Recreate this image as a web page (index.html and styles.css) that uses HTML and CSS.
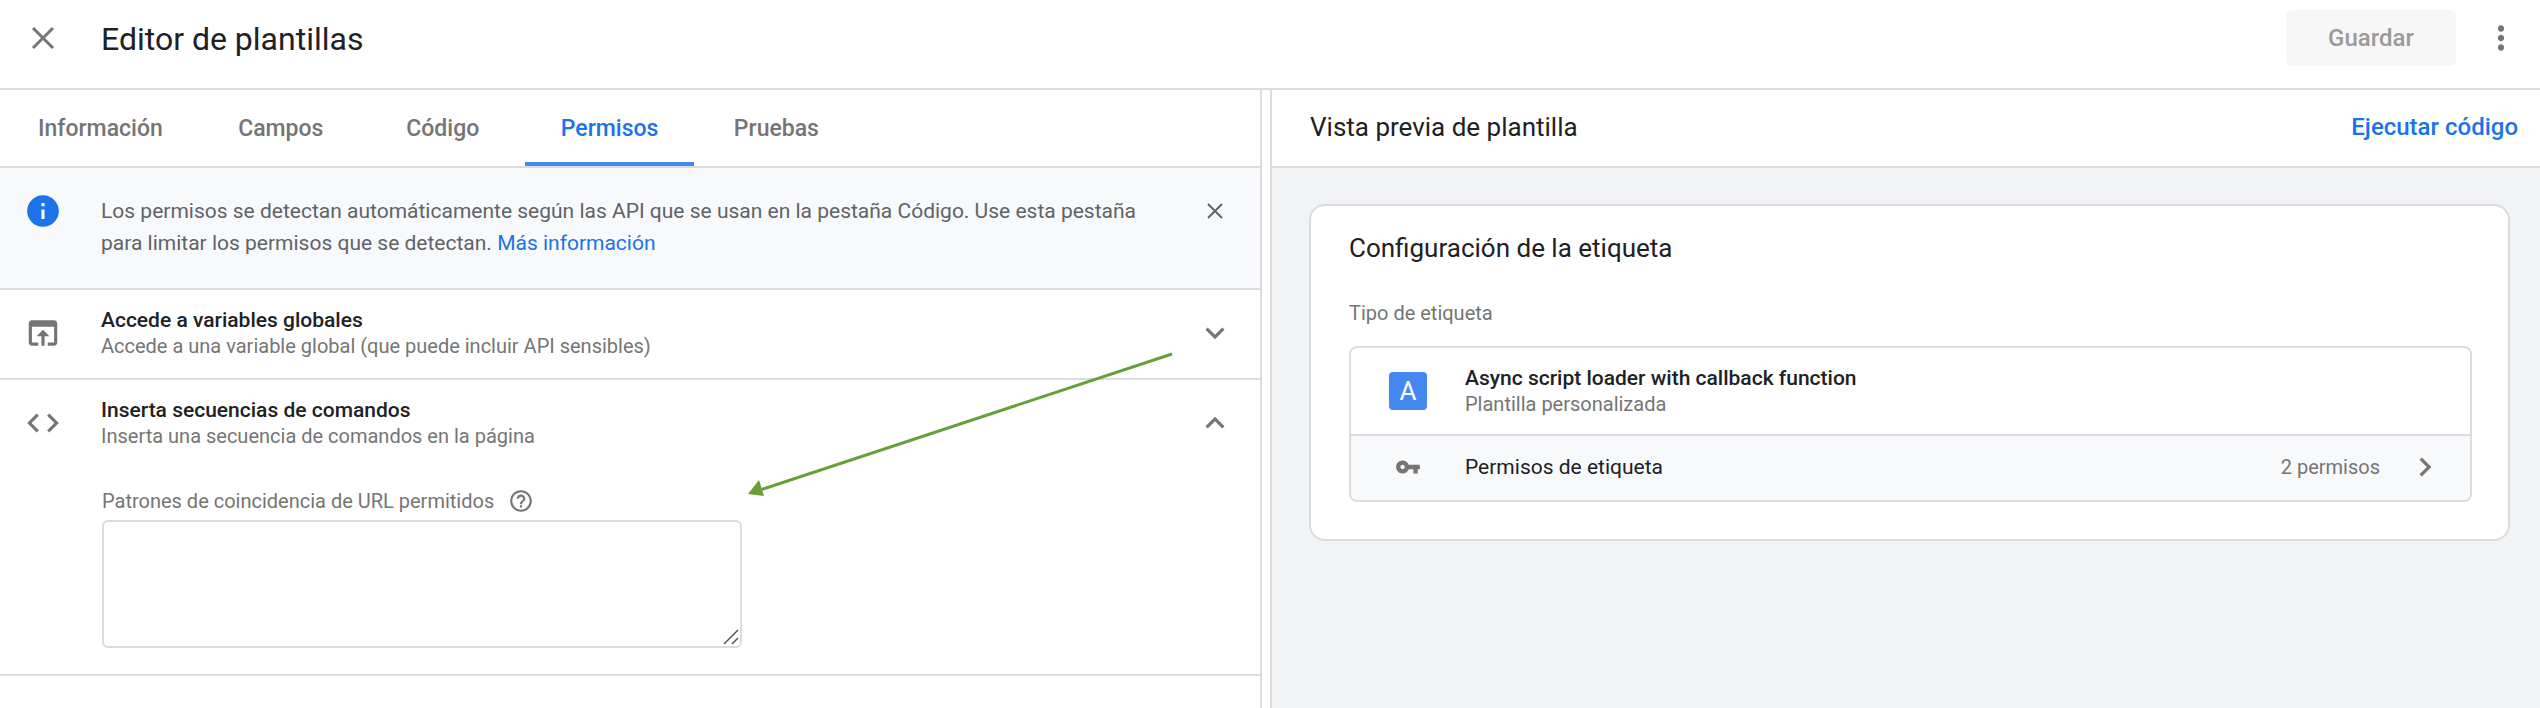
FILE: index.html
```html
<!DOCTYPE html>
<html lang="es">
<head>
<meta charset="utf-8">
<title>Editor de plantillas</title>
<meta name="viewport" content="width=device-width, initial-scale=1">
<link rel="stylesheet" href="styles.css">
</head>
<body>
<div class="app">
  <header class="topbar">
    <button class="icon-button" type="button" aria-label="Cerrar">
      <svg class="icon" viewBox="0 0 38 38"><path class="line line-wide" d="M9 9l20 20M29 9L9 29"/></svg>
    </button>
    <h1 class="topbar-title">Editor de plantillas</h1>
    <button class="save-button" type="button" disabled>Guardar</button>
    <button class="icon-button" type="button" aria-label="Más opciones">
      <svg class="icon" viewBox="0 0 24 24"><path d="M12 8c1.100 0 2-.9 2-2s-.9-2-2-2-2 .9-2 2 .9 2 2 2zm0 2c-1.100 0-2 .9-2 2s.9 2 2 2 2-.9 2-2-.9-2-2-2zm0 6c-1.100 0-2 .9-2 2s.9 2 2 2 2-.9 2-2-.9-2-2-2z"/></svg>
    </button>
  </header>

  <div class="workspace">
    <main class="editor">
      <nav class="tabs">
        <button class="tab" type="button">Información</button>
        <button class="tab" type="button">Campos</button>
        <button class="tab" type="button">Código</button>
        <button class="tab tab-active" type="button" aria-current="page">Permisos</button>
        <button class="tab" type="button">Pruebas</button>
      </nav>

      <section class="banner">
        <svg class="icon icon-info" viewBox="0 0 24 24"><path d="M12 2C6.480 2 2 6.480 2 12s4.480 10 10 10 10-4.480 10-10S17.520 2 12 2zm1 15h-2v-6h2v6zm0-8h-2V7h2v2z"/></svg>
        <p class="banner-text">Los permisos se detectan automáticamente según las API que se usan en la pestaña Código. Use esta pestaña para limitar los permisos que se detectan. <a class="link" href="#">Más información</a></p>
        <button class="icon-button" type="button" aria-label="Descartar">
          <svg class="icon icon-dark" viewBox="0 0 38 38"><path class="line" d="M12 12l14 14M26 12L12 26"/></svg>
        </button>
      </section>

      <section class="permission">
        <div class="permission-head">
          <svg class="icon" viewBox="0 0 24 24"><path d="M19 4H5c-1.110 0-2 .9-2 2v12c0 1.100.89 2 2 2h4v-2H5V8h14v10h-4v2h4c1.100 0 2-.9 2-2V6c0-1.100-.89-2-2-2zm-7 6l-4 4h3v6h2v-6h3l-4-4z"/></svg>
          <div class="permission-text">
            <h2 class="item-title">Accede a variables globales</h2>
            <p class="item-note">Accede a una variable global (que puede incluir API sensibles)</p>
          </div>
          <button class="icon-button" type="button" aria-label="Expandir" aria-expanded="false">
            <svg class="icon" viewBox="0 0 24 24"><path d="M16.590 8.590L12 13.170 7.410 8.590 6 10l6 6 6-6z"/></svg>
          </button>
        </div>
      </section>

      <section class="permission">
        <div class="permission-head">
          <svg class="icon" viewBox="0 0 24 24"><path d="M9.400 16.600L4.800 12l4.600-4.600L8 6l-6 6 6 6 1.400-1.400zm5.200 0l4.600-4.600-4.600-4.600L16 6l6 6-6 6-1.400-1.400z"/></svg>
          <div class="permission-text">
            <h2 class="item-title">Inserta secuencias de comandos</h2>
            <p class="item-note">Inserta una secuencia de comandos en la página</p>
          </div>
          <button class="icon-button" type="button" aria-label="Contraer" aria-expanded="true">
            <svg class="icon" viewBox="0 0 24 24"><path d="M12 8l-6 6 1.410 1.410L12 10.830l4.590 4.580L18 14z"/></svg>
          </button>
        </div>
        <div class="permission-body">
          <div class="field-label">
            <label class="item-note" for="patterns">Patrones de coincidencia de URL permitidos</label>
            <svg class="icon icon-small" viewBox="0 0 24 24"><path d="M11 18h2v-2h-2v2zm1-16C6.480 2 2 6.480 2 12s4.480 10 10 10 10-4.480 10-10S17.520 2 12 2zm0 18c-4.410 0-8-3.590-8-8s3.590-8 8-8 8 3.590 8 8-3.590 8-8 8zm0-14c-2.210 0-4 1.790-4 4h2c0-1.100.9-2 2-2s2 .9 2 2c0 2-3 1.750-3 5h2c0-2.250 3-2.500 3-5 0-2.210-1.790-4-4-4z"/></svg>
          </div>
          <div class="pattern-box">
            <textarea class="pattern-input" id="patterns"></textarea>
            <svg class="grip" viewBox="0 0 16 16"><path d="M1 15L15 1M9 15l6-6"/></svg>
          </div>
        </div>
      </section>

      <svg class="arrow" viewBox="0 0 426 148"><path class="arrow-shaft" d="M424 4L12 140"/><path class="arrow-head" d="M0 144l11-14 5 16z"/></svg>
    </main>

    <aside class="preview">
      <div class="preview-head">
        <h2 class="heading">Vista previa de plantilla</h2>
        <button class="run-button" type="button">Ejecutar código</button>
      </div>
      <section class="card">
        <h3 class="heading">Configuración de la etiqueta</h3>
        <p class="item-note card-label">Tipo de etiqueta</p>
        <div class="tag-box">
          <div class="tag-row">
            <span class="tag-logo">A</span>
            <div>
              <h4 class="item-title">Async script loader with callback function</h4>
              <p class="item-note">Plantilla personalizada</p>
            </div>
          </div>
          <button class="tag-row tag-permissions" type="button">
            <span class="tag-icon"><svg class="icon icon-small" viewBox="0 0 24 24"><path d="M12.650 10C11.830 7.670 9.610 6 7 6c-3.310 0-6 2.690-6 6s2.690 6 6 6c2.610 0 4.830-1.670 5.650-4H17v4h4v-4h2v-4H12.650zM7 14c-1.100 0-2-.9-2-2s.9-2 2-2 2 .9 2 2-.9 2-2 2z"/></svg></span>
            <span class="tag-name">Permisos de etiqueta</span>
            <span class="item-note">2 permisos</span>
            <svg class="icon" viewBox="0 0 24 24"><path d="M10 6L8.590 7.410 13.170 12l-4.580 4.590L10 18l6-6z"/></svg>
          </button>
        </div>
      </section>
    </aside>
  </div>
</div>
</body>
</html>
```
FILE: styles.css
```css
:root {
  --line: #dadce0;
  --text: #202124;
  --muted: #757575;
  --blue: #1a73e8;
}

* {
  box-sizing: border-box;
}

body {
  margin: 0;
  background: #fff;
  color: var(--text);
  font: 21px/32px Roboto, "Liberation Sans", sans-serif;
}

h1, h2, h3, h4, p {
  margin: 0;
  font-weight: 400;
}

button {
  padding: 0;
  border: 0;
  background: none;
  color: inherit;
  font: inherit;
  cursor: pointer;
}

.app {
  display: flex;
  flex-direction: column;
  min-height: 100vh;
}

.icon {
  display: block;
  flex: none;
  width: 38px;
  height: 38px;
  fill: var(--muted);
  stroke: var(--muted);
  stroke-width: 0;
}

.icon-small {
  width: 26px;
  height: 26px;
}

.icon-info {
  fill: var(--blue);
}

.icon-dark {
  stroke: #5f6368;
}

.line {
  fill: none;
  stroke-width: 2;
}

.line-wide {
  stroke-width: 3;
}

.icon-button {
  flex: none;
}

.topbar {
  display: flex;
  align-items: center;
  padding: 10px 20px 22px 24px;
  border-bottom: 2px solid var(--line);
}

.topbar-title {
  flex: 1;
  margin-left: 39px;
  padding-top: 2px;
  font-size: 32px;
  line-height: 40px;
}

.save-button {
  min-width: 170px;
  height: 56px;
  margin-right: 26px;
  padding: 0 40px;
  border-radius: 6px;
  background: #f7f7f7;
  color: #9a9a9a;
  font-size: 24px;
  font-weight: 500;
}

.workspace {
  display: grid;
  flex: 1;
  grid-template-columns: minmax(0, 1262fr) minmax(0, 1270fr);
  column-gap: 8px;
}

.editor {
  position: relative;
  border-right: 2px solid var(--line);
}

.tabs {
  display: flex;
  gap: 2px;
  height: 78px;
  padding-left: 2px;
  border-bottom: 2px solid var(--line);
}

.tab {
  min-width: 160px;
  padding: 6px 36px 0;
  border-bottom: 4px solid transparent;
  color: var(--muted);
  font-size: 23px;
  font-weight: 500;
}

.tab-active {
  border-color: #4688f1;
  color: var(--blue);
}

.banner {
  display: flex;
  align-items: flex-start;
  padding: 24px 26px 29px 24px;
  border-bottom: 2px solid var(--line);
  background: #f8f9fb;
}

.banner-text {
  flex: 1;
  margin: 3px 24px 0 39px;
  color: #5f6368;
}

.link {
  color: var(--blue);
  text-decoration: none;
}

.permission {
  border-bottom: 2px solid var(--line);
}

.permission-head {
  display: flex;
  align-items: center;
  padding: 17px 26px 19px 24px;
}

.permission-text {
  flex: 1;
  margin-left: 39px;
}

.item-title {
  font-size: 21px;
  font-weight: 500;
  line-height: 26px;
}

.item-note {
  color: var(--muted);
  font-size: 20px;
  line-height: 26px;
}

.permission-body {
  padding: 20px 24px 26px 102px;
}

.field-label {
  display: flex;
  align-items: center;
  gap: 14px;
  margin-bottom: 6px;
}

.pattern-box {
  position: relative;
  width: 640px;
  max-width: 100%;
}

.pattern-input {
  display: block;
  width: 100%;
  height: 128px;
  padding: 12px;
  border: 2px solid var(--line);
  border-radius: 6px;
  background: #fff;
  font: inherit;
  resize: none;
}

.grip {
  position: absolute;
  right: 3px;
  bottom: 3px;
  width: 16px;
  height: 16px;
  fill: none;
  stroke: #555;
  stroke-width: 1.5;
}

.arrow {
  position: absolute;
  top: 260px;
  left: 748px;
  width: 426px;
  height: 148px;
  pointer-events: none;
}

.arrow-shaft {
  fill: none;
  stroke: #689f38;
  stroke-width: 3;
}

.arrow-head {
  fill: #689f38;
}

.preview {
  border-left: 2px solid var(--line);
  background: #f1f3f4;
}

.preview-head {
  display: flex;
  align-items: center;
  justify-content: space-between;
  height: 78px;
  padding: 0 22px 2px 38px;
  border-bottom: 2px solid var(--line);
  background: #fff;
}

.heading {
  font-size: 26px;
  line-height: 32px;
}

.run-button {
  color: var(--blue);
  font-size: 24px;
  font-weight: 500;
}

.card {
  margin: 36px 30px 36px 37px;
  padding: 26px 36px 37px 38px;
  border: 2px solid var(--line);
  border-radius: 16px;
  background: #fff;
}

.card-label {
  margin: 36px 0 20px;
}

.tag-box {
  overflow: hidden;
  border: 2px solid var(--line);
  border-radius: 8px;
}

.tag-row {
  display: flex;
  align-items: center;
  width: 100%;
  padding: 17px 26px 17px 38px;
}

.tag-permissions {
  padding: 12px 26px 14px 38px;
  border-top: 2px solid var(--line);
  background: #f8f9fb;
  text-align: left;
}

.tag-logo,
.tag-icon {
  display: flex;
  flex: none;
  align-items: center;
  justify-content: center;
  width: 38px;
  height: 38px;
  margin-right: 38px;
}

.tag-logo {
  border-radius: 4px;
  background: #4688f1;
  color: #fff;
  font-size: 26px;
}

.tag-name {
  flex: 1;
}

.tag-permissions .item-note {
  margin-right: 26px;
}
```
